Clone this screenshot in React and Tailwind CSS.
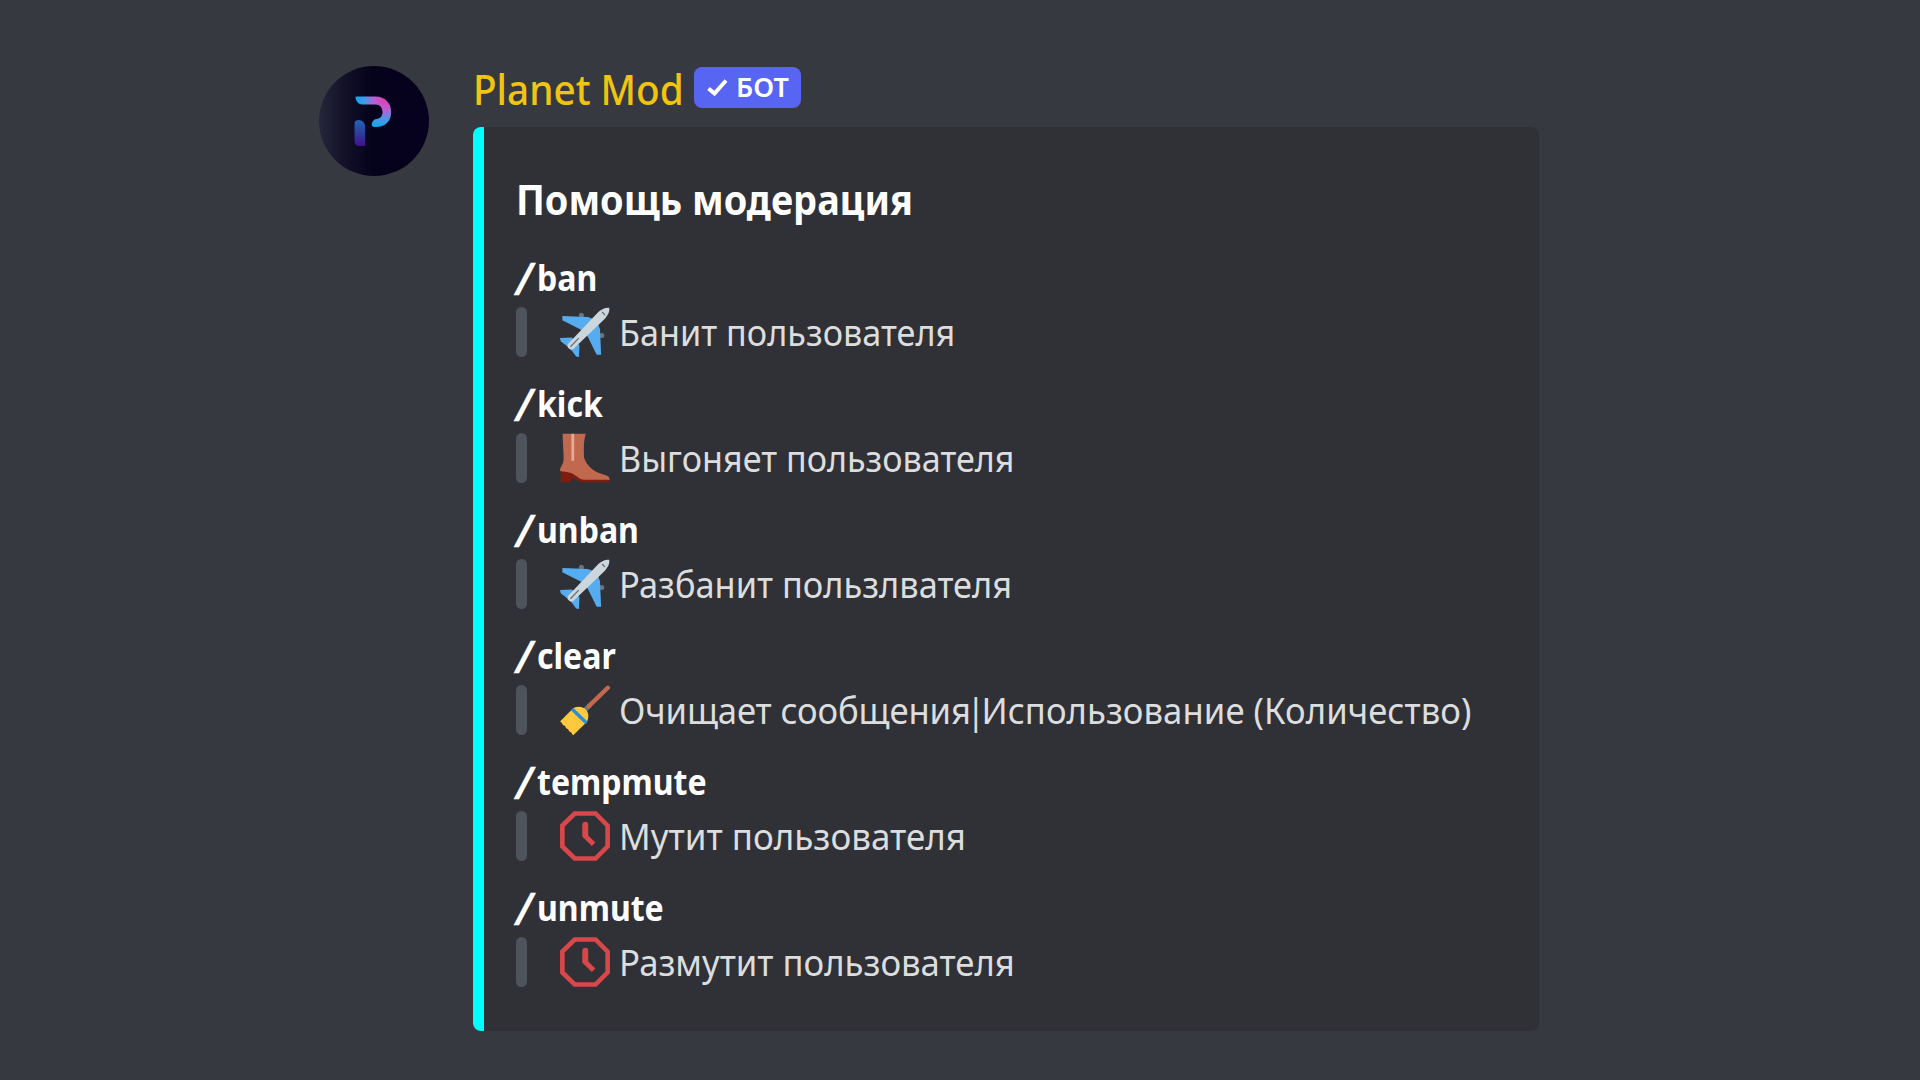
const Plane = () => (
  <svg viewBox="0 0 36 36" className="size-[50px] shrink-0">
    <circle cx="15.4" cy="5.9" r="1.8" fill="#66757f" />
    <circle cx="30.1" cy="20.6" r="1.8" fill="#66757f" />
    <path fill="#55acee" d="M1.7 6.4 L20 7.2 L25 9 L17 18 L14.5 16 L1.7 9.6Z" />
    <path fill="#55acee" d="M29.6 34.3 L28.8 16 L27 11 L18 19 L20 21.5 L26.4 34.3Z" />
    <path fill="#55acee" d="M0 22.3 L8.5 22 L14 27.5 L13.7 36 L11.6 35.6 L7.5 30 L.5 24.6Z" />
    <path fill="#ccd6dd" d="M35.4.6 C36 3 34.5 6 32.5 8.2 L9.6 30.2 C8 31.3 7 30.5 6.3 29.7 C5.5 29 4.9 28 5.9 26.4 L27.8 3.5 C30 1.5 33 0 35.4.6Z" />
    <path stroke="#66757f" strokeWidth="1" fill="none" d="M7.5 28.6 L13.5 22.4" />
    <path stroke="#66757f" strokeWidth="1" fill="none" d="M30.3 3.6 L32.4 5.7" />
  </svg>
);

const Boot = () => (
  <svg viewBox="0 0 36 36" className="size-[50px] shrink-0">
    <path fill="#7b1e0f" d="M.5 26 L.5 35.5 H7.8 L8.3 32.2 C12 33 13 35.5 17 35.5 H34.5 C35.6 35.5 35.9 34 35.8 32.8 L20 27Z" />
    <path fill="#c1694f" d="M1.9.6 H18.6 C17.2 5 16.9 10 17.3 17.5 C18.5 22.5 23 27 28.5 29 C32 30.3 35.8 30.5 35.8 33.6 H17.5 C13.5 33.6 12.5 30.8 8 28.8 C5 27.8 2 27.8 0 27.3 C-.2 24.5 2.6 23 2.6 18.5 C2.6 12 1.9 7 1.9.6Z" />
    <path stroke="#e5ac93" strokeWidth="2" d="M9.2.6 V20" />
  </svg>
);

const Broom = () => (
  <svg viewBox="0 0 36 36" className="size-[50px] shrink-0">
    <path stroke="#66757f" strokeWidth="3.4" d="M17 19 L21.5 14.6" />
    <path stroke="#c1694f" strokeWidth="3.2" strokeLinecap="round" d="M20.8 15.2 L34.4 2" />
    <path fill="#ffc83d" d="M0 26.2 L8.8 17.4 C11.5 15 16 15.2 18.6 17.6 C21 20 21 24.5 18.9 27 L9.7 36 C9 36 8.5 35 8.3 34.3 C7 34 6 33 5.9 31.9 C4.5 31.5 3.8 30.5 3.6 29.4 C2.3 29 1.5 28.3 1.4 27.3Z" />
    <path stroke="#2a8fd8" strokeWidth="2.5" d="M8.7 17.2 L19.1 27.3" />
  </svg>
);

const Timeout = () => (
  <svg viewBox="0 0 36 36" className="size-[50px] shrink-0" fill="none" stroke="#d8484b">
    <path strokeWidth="3.3" d="M10.6 1.8 H25.6 L34.3 10.5 V25.5 L25.6 34.2 H10.6 L1.7 25.5 V10.5Z" />
    <path strokeWidth="4.2" strokeLinecap="round" d="M18.2 9.8 V17.5" />
    <path strokeWidth="3.6" strokeLinejoin="round" d="M18.2 9.8 V18 L24.2 24" />
  </svg>
);

const Avatar = () => (
  <svg viewBox="9.5 10 110 110" className="mt-[66px] size-[110px] shrink-0">
    <defs>
      <linearGradient id="disc">
        <stop offset="0" stopColor="#26263a" />
        <stop offset=".22" stopColor="#14122a" />
        <stop offset=".48" stopColor="#05021c" />
        <stop offset="1" stopColor="#05001e" />
      </linearGradient>
      <radialGradient id="bowl" gradientUnits="userSpaceOnUse" cx="75" cy="44" r="27">
        <stop offset="0" stopColor="#e23fb8" />
        <stop offset=".4" stopColor="#b560d4" />
        <stop offset=".72" stopColor="#4a97e6" />
        <stop offset="1" stopColor="#16a4ee" />
      </radialGradient>
      <linearGradient id="stem" x2="0" y2="1">
        <stop offset="0" stopColor="#1f66b8" />
        <stop offset=".5" stopColor="#2c3c9c" />
        <stop offset="1" stopColor="#45108c" />
      </linearGradient>
    </defs>
    <circle cx="64.5" cy="65" r="55" fill="url(#disc)" />
    <path fill="url(#bowl)" d="M46 40.5 H66 C75.5 40.5 81.7 47 81.7 56 C81.7 65 76 71 66 71 H65 C62 71 61.5 68 63 66 C64 64 65 63.3 67 63 C71 62.3 73 60 73 56 C73 51.5 70.5 48.5 66 48.5 H53 C49 48.5 46 45 46 40.5Z" />
    <path fill="url(#stem)" d="M45 67 C45 65 47 64 49 64 C53 64 55.7 67 55.7 71 V90 H50 C47 90 45 88 45 85Z" />
  </svg>
);

const commands = [
  { name: "ban", icon: Plane, text: "Банит пользователя", fit: "scale-x-[0.925]" },
  { name: "kick", icon: Boot, text: "Выгоняет пользователя", fit: "scale-x-[0.923]" },
  { name: "unban", icon: Plane, text: "Разбанит пользлвателя", fit: "scale-x-[0.93]" },
  {
    name: "clear",
    icon: Broom,
    text: (
      <span className="tracking-[-0.15px]">
        Очищает сообщения<span className="mr-[-4px] ml-[-5px]">|</span>
        <span className="tracking-[0.06px]">Использование (Количество)</span>
      </span>
    ),
    fit: "scale-x-[0.937]",
  },
  { name: "tempmute", icon: Timeout, text: "Мутит пользователя", fit: "scale-x-[0.945]" },
  { name: "unmute", icon: Timeout, text: "Размутит пользователя", fit: "scale-x-[0.938]" },
];

function Command({ name, icon: Icon, text, fit }) {
  return (
    <section className="flex flex-col gap-[7px]">
      <h3 className="flex h-[45px] pt-px text-[36px] leading-[44px] font-bold whitespace-nowrap text-white">
        <span className="w-[21px] origin-center -skew-x-[9deg] text-[45px] leading-[44px] font-semibold">/</span>
        <span className="origin-left scale-x-[0.89]">{name}</span>
      </h3>
      <div className="flex h-[50px] items-center">
        <div className="h-[50px] w-[11px] shrink-0 rounded-full bg-[#4f545c]" />
        <div className="ml-[33px] flex items-center">
          <Icon />
          <p className={"ml-[9px] origin-left text-[37px] leading-[50px] whitespace-nowrap text-[#dcddde] " + fit}>{text}</p>
        </div>
      </div>
    </section>
  );
}

export default function App() {
  return (
    <main className="flex h-[1080px] w-[1920px] overflow-hidden bg-[#36393f] pl-[319px] font-['Noto_Sans',sans-serif]">
      <Avatar />
      <div className="ml-[43.5px] pt-[64px]">
        <header className="flex h-[62.5px]">
          <h1 className="w-[221.5px] origin-left scale-x-[0.944] text-[41px] leading-[50px] font-medium whitespace-nowrap text-[#f1c40f]">Planet Mod</h1>
          <span className="mt-[2.5px] flex h-[41px] w-[107px] items-center rounded-lg bg-[#5865f2] pl-[13px]">
            <svg viewBox="0 0 21 17" className="h-[17px] w-[21px]" fill="none" stroke="#fff" strokeWidth="4">
              <path d="M1.5 9.5 L7.5 14.5 L19 1.5" />
            </svg>
            <span className="mb-[2px] ml-2 origin-left text-[27px] leading-[39px] font-semibold text-white">БОТ</span>
          </span>
        </header>
        <article className="flex h-[904.5px] w-[1066px] overflow-hidden rounded-[8px] bg-[#2f3136]">
          <div className="w-[11.5px] shrink-0 bg-[#00ffff]" />
          <div className="pt-[47px] pl-[31.5px]">
            <h2 className="mb-[31px] origin-left scale-x-[0.924] text-[41px] leading-[50px] font-bold whitespace-nowrap text-white">Помощь модерация</h2>
            <div className="flex flex-col gap-6">
              {commands.map((c) => (
                <Command key={c.name} {...c} />
              ))}
            </div>
          </div>
        </article>
      </div>
    </main>
  );
}
